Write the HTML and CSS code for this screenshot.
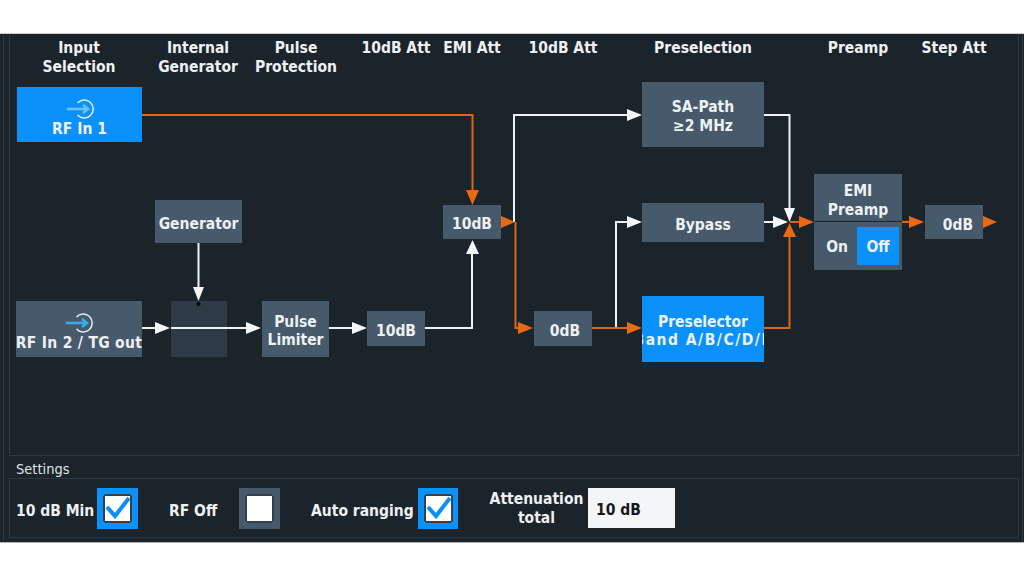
FILE: index.html
```html
<!DOCTYPE html>
<html lang="en">
<head>
<meta charset="utf-8">
<title>Input Attenuation Overview</title>
<link rel="stylesheet" href="styles.css">
</head>
<body>
<main class="screen">
  <section class="diagram">
    <header class="columns">
      <div class="col">Input<br>Selection</div>
      <div class="col">Internal<br>Generator</div>
      <div class="col">Pulse<br>Protection</div>
      <div class="col">10dB Att</div>
      <div class="col">EMI Att</div>
      <div class="col">10dB Att</div>
      <div class="col">Preselection</div>
      <div class="col">Preamp</div>
      <div class="col">Step Att</div>
    </header>

    <svg class="wires" viewBox="0 0 1024 576" width="1024" height="576" aria-hidden="true">
      <g class="white">
        <path d="M514 222V115H630"/>
        <path d="M142 328H157"/>
        <path d="M171 328H248"/>
        <path d="M198.500 243V289"/>
        <path d="M329 328H354"/>
        <path d="M425 328H472V252"/>
        <path d="M616 328V222H630"/>
        <path d="M764 222H775"/>
        <path d="M764 115H789.500V210"/>
        <polygon points="627,109 642,115 627,121"/>
        <polygon points="155,322 170,328 155,334"/>
        <polygon points="246,322 261,328 246,334"/>
        <polygon points="193,287 198.500,301 204,287"/>
        <polygon points="352,322 367,328 352,334"/>
        <polygon points="466,254 472.500,240 479,254"/>
        <polygon points="627,216 642,222 627,228"/>
        <polygon points="773,216 788,222 773,228"/>
        <polygon points="784,208 789.500,222 795,208"/>
      </g>
      <g class="orange">
        <path d="M142 115H472.500V192"/>
        <path d="M515.500 222V328H520"/>
        <path d="M592 328H630"/>
        <path d="M764 328H789.500V236"/>
        <path d="M790 222H802"/>
        <path d="M902 222H911"/>
        <polygon points="466,190 472.500,205 479,190"/>
        <polygon points="501,216 515,222 501,228"/>
        <polygon points="518,322 533,328 518,334"/>
        <polygon points="627,322 642,328 627,334"/>
        <polygon points="783,237 789.500,223 796,237"/>
        <polygon points="799,216 814,222 799,228"/>
        <polygon points="909,216 924,222 909,228"/>
        <polygon points="983,216 997,222 983,228"/>
      </g>
      <circle class="dot" cx="198.500" cy="304" r="2"/>
    </svg>

    <div class="node node-active n-rf1">
      <svg class="port" viewBox="0 0 30 22" width="30" height="22" aria-hidden="true">
        <path class="port-ring" d="M11.500 5A9 9 0 1 1 11.500 17"/>
        <path class="port-arrow-soft" d="M1 11H21M17 7L22 11L17 15"/>
      </svg>
      <span class="clip">RF In 1</span>
    </div>
    <div class="node n-gen">Generator</div>
    <div class="node n-rf2">
      <svg class="port" viewBox="0 0 30 22" width="30" height="22" aria-hidden="true">
        <path class="port-ring" d="M11.500 5A9 9 0 1 1 11.500 17"/>
        <path class="port-arrow" d="M1 11H21M17 7L22 11L17 15"/>
      </svg>
      <span class="clip clip-rf2">RF In 2 / TG out</span>
    </div>
    <div class="node n-switch"></div>
    <div class="node n-limiter">Pulse<br>Limiter</div>
    <div class="node n-att1">10dB</div>
    <div class="node n-att2">10dB</div>
    <div class="node n-att3">0dB</div>
    <div class="node n-sa">SA-Path<br>≥2 MHz</div>
    <div class="node n-bypass">Bypass</div>
    <div class="node node-active n-presel">Preselector<span class="clip clip-band">Band A/B/C/D/E</span></div>
    <div class="node n-preamp">
      <div class="preamp-title">EMI<br>Preamp</div>
      <div class="preamp-toggle">
        <span class="toggle-opt">On</span>
        <span class="toggle-opt toggle-on">Off</span>
      </div>
    </div>
    <div class="node n-step">0dB</div>
  </section>

  <div class="settings-title">Settings</div>
  <section class="settings">
    <span class="lbl lbl-min">10 dB Min</span>
    <span class="check check-on">
      <span class="check-box">
        <svg viewBox="0 0 29 29" width="29" height="29" aria-hidden="true"><path d="M4 13L12 22L26 4"/></svg>
      </span>
    </span>
    <span class="lbl lbl-rf">RF Off</span>
    <span class="check"><span class="check-box"></span></span>
    <span class="lbl lbl-auto">Auto ranging</span>
    <span class="check check-on check-auto">
      <span class="check-box">
        <svg viewBox="0 0 29 29" width="29" height="29" aria-hidden="true"><path d="M4 13L12 22L26 4"/></svg>
      </span>
    </span>
    <span class="lbl lbl-att">Attenuation<br>total</span>
    <span class="value">10 dB</span>
  </section>
</main>
</body>
</html>
```

FILE: styles.css
```css
* { box-sizing: border-box; }
html, body { margin: 0; padding: 0; background: #fff; }
body {
  width: 1024px;
  height: 576px;
  overflow: hidden;
  padding-top: 33px;
  font-family: "DejaVu Sans Condensed", "DejaVu Sans", sans-serif;
  font-size: 15.500px;
  font-weight: 700;
  color: #eef1f3;
}
.screen {
  height: 510px;
  padding: 0 5px 5px 9px;
  background-color: #1b232b;
  background-image: linear-gradient(#2c3842, #2c3842), linear-gradient(#2c3842, #2c3842);
  background-size: 1px 100%, 1px 100%;
  background-position: 3px 0, 1022px 0;
  background-repeat: no-repeat;
  border-top: 1px solid #c9ced2;
  border-bottom: 1px solid #aab2b8;
}
.diagram {
  position: relative;
  height: 422px;
  border: 1px solid #2c3842;
  border-top: 0;
}
.columns {
  display: grid;
  grid-template-columns: 138px 100px 96px 104px 48px 134px 146px 164px 28px;
  padding-top: 5px;
  line-height: 18.500px;
}
.col {
  display: flex;
  justify-content: center;
  white-space: nowrap;
  text-align: center;
}
.wires {
  position: absolute;
  left: -10px;
  top: -34px;
  z-index: 2;
  pointer-events: none;
}
.wires path { fill: none; stroke-width: 2; }
.white path { stroke: #eef2f3; }
.white polygon { fill: #f4f6f7; }
.orange path { stroke: #d9661c; }
.orange polygon { fill: #ea6a14; }
.dot { fill: #050505; }

.node {
  position: absolute;
  display: flex;
  flex-direction: column;
  align-items: center;
  justify-content: center;
  overflow: hidden;
  background: #465a6b;
  text-align: center;
  line-height: 18.500px;
  white-space: nowrap;
  padding-top: 4px;
}
.node-active { background: #0a91fb; }
.clip { display: block; white-space: nowrap; }
.clip-rf2 { letter-spacing: 0.300px; }
.clip-band { letter-spacing: 1.500px; }
.n-rf1 { left: 7px; top: 53px; width: 125px; height: 55px; justify-content: flex-start; padding-top: 11px; }
.n-gen { left: 145px; top: 166px; width: 87px; height: 43px; padding-top: 5px; }
.n-rf2 { left: 6px; top: 267px; width: 126px; height: 56px; justify-content: flex-start; padding-top: 11px; }
.n-switch { left: 161px; top: 267px; width: 56px; height: 56px; background: #2e3a45; }
.n-limiter { left: 252px; top: 267px; width: 67px; height: 56px; }
.n-att1 { left: 357px; top: 277px; width: 58px; height: 35px; padding-top: 5px; }
.n-att2 { left: 433px; top: 171px; width: 58px; height: 34px; padding-top: 5px; }
.n-att3 { left: 524px; top: 277px; width: 58px; height: 35px; padding-left: 4px; padding-top: 5px; }
.n-sa { left: 632px; top: 48px; width: 122px; height: 65px; }
.n-bypass { left: 632px; top: 169px; width: 122px; height: 39px; padding-top: 5px; }
.n-presel { left: 632px; top: 262px; width: 122px; height: 66px; }
.n-preamp { left: 804px; top: 140px; width: 88px; height: 96px; justify-content: flex-start; padding-top: 0; }
.n-step { left: 915px; top: 171px; width: 58px; height: 34px; padding-left: 8px; padding-top: 6px; }
.port { display: block; margin-left: 2px; margin-bottom: 0; }
.port-ring { fill: none; stroke: #e6eef3; stroke-width: 1.500; }
.port-arrow { fill: none; stroke: #35b0e6; stroke-width: 2.500; }
.port-arrow-soft { fill: none; stroke: #6cc2f2; stroke-width: 2.500; }
.preamp-title {
  height: 48px;
  width: 100%;
  padding-top: 8px;
  border-bottom: 1px solid #1b232b;
}
.preamp-toggle {
  display: flex;
  align-items: center;
  justify-content: flex-end;
  gap: 9px;
  width: 100%;
  height: 48px;
  padding-right: 3px;
}
.toggle-opt { display: flex; align-items: center; justify-content: center; padding-top: 2px; }
.toggle-on { width: 42px; height: 38px; background: #0a91fb; }

.settings-title {
  height: 22px;
  padding: 5px 0 0 7px;
  font-size: 14.500px;
  font-weight: 400;
  line-height: 17px;
  color: #dfe3e6;
}
.settings {
  display: flex;
  align-items: center;
  height: 60px;
  border: 1px solid #2c3842;
  padding-left: 6px;
  line-height: 18.500px;
}
.lbl { white-space: nowrap; text-align: center; }
.lbl-min { width: 81px; text-align: left; padding-top: 7px; }
.lbl-rf { width: 48px; margin: 0 22px 0 31px; padding-top: 7px; }
.lbl-auto { width: 102px; margin: 0 5px 0 31px; padding-top: 7px; }
.lbl-att { width: 95px; margin: 0 4px 0 31px; padding-top: 1px; }
.check {
  display: flex;
  align-items: center;
  justify-content: center;
  flex: none;
  width: 41px;
  height: 41px;
  background: #465a6b;
}
.check-on { background: #0a91fb; }
.check-auto { width: 40px; }
.check-box {
  display: block;
  width: 29px;
  height: 29px;
  background: #fff;
  border-radius: 2px;
  box-shadow: inset 0 0 0 2px #33414e;
}
.check-box svg { display: block; }
.check-box path { fill: none; stroke: #0a8ff5; stroke-width: 4; }
.value {
  display: flex;
  align-items: center;
  width: 87px;
  height: 40px;
  padding-left: 8px;
  padding-top: 4px;
  background: #f4f5f7;
  color: #15191d;
}
```
